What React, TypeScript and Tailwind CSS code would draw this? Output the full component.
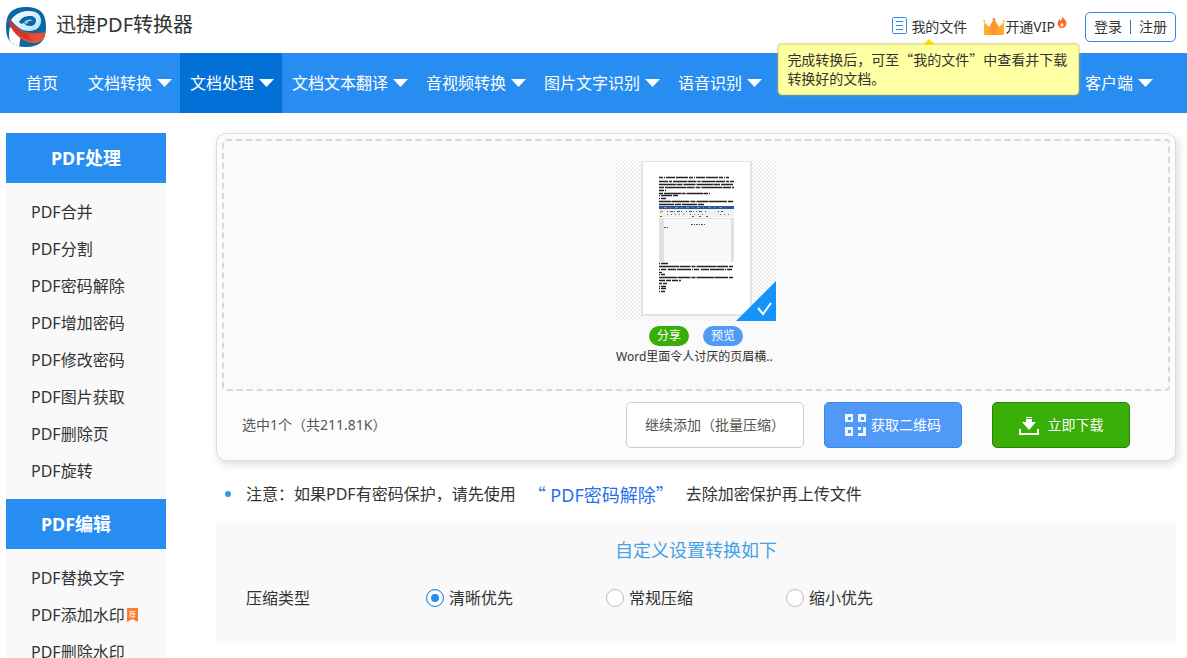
import React, { useState } from "react";

const menu = ["文档转换", "文档处理", "文档文本翻译", "音视频转换", "图片文字识别", "语音识别"];

const sideMenu = [
  {
    title: "PDF处理",
    pad: "",
    items: ["PDF合并", "PDF分割", "PDF密码解除", "PDF增加密码", "PDF修改密码", "PDF图片获取", "PDF删除页", "PDF旋转"],
  },
  {
    title: "PDF编辑",
    pad: "pr-5",
    items: ["PDF替换文字", "PDF添加水印", "PDF删除水印"],
  },
];

const compressTypes = ["清晰优先", "常规压缩", "缩小优先"];

// [y, width, dash pattern] of each text line on the page preview
const docLines: [number, number, string][] = [
  [16, 70, "4 1 1 1 9 1 12 1"],
  [20, 75, "9 1 3 1 14 0.5"],
  [23, 75, "17 0.5 6 1 12 1"],
  [26, 75, "5 1 21 0.5 8 1"],
  [29, 7, "5 1"],
  [32, 51, "4 1 17 0.5"],
  [34, 19, "1 1 10 0"],
  [37, 7, "1 1 5 0"],
  [40, 75, "12 0.5 18 1 5 1"],
  [43, 45, "15 1 6 1"],
  [102, 9, "1 1 8 0"],
  [105, 75, "20 0.5 11 1 4 1"],
  [108, 75, "1 1 5 2 8 1 14 1"],
  [111, 3, "3 0"],
  [113, 6, "1 1 5 0"],
  [116, 75, "18 0.5 13 1 4 1"],
  [119, 22, "6 1 5 1"],
  [122, 8, "3 1 4 0"],
  [125, 7, "1 1 5 0"],
  [127, 7, "1 1 5 0"],
  [130, 6, "1 1 5 0"],
];

function Caret() {
  return (
    <svg width="15" height="8" viewBox="0 0 15 8" className="shrink-0">
      <path d="M0 0h15L7.5 8z" fill="#fff" />
    </svg>
  );
}

function Logo() {
  return (
    <svg width="40" height="40" viewBox="0 0 40 40" className="shrink-0">
      <defs>
        <clipPath id="logoClip">
          <path d="M20 0C34 0 40 6 40 20S34 40 20 40 0 34 0 20 6 0 20 0z" />
        </clipPath>
        <linearGradient id="ring" x1="0" y1="0" x2="1" y2="1">
          <stop offset="0" stopColor="#fff" />
          <stop offset="1" stopColor="#b9dff3" />
        </linearGradient>
        <linearGradient id="swoosh" x1="0" y1="0" x2="1" y2="1">
          <stop offset="0" stopColor="#c92c20" />
          <stop offset="1" stopColor="#f2583b" />
        </linearGradient>
      </defs>
      <g clipPath="url(#logoClip)">
        <rect width="40" height="40" fill="#0868a5" />
        <path d="M4 20l11 8-2 12H7C3 35 2 28 4 20z" fill="#fff" />
        <path
          d="M5 13C10 6 16 4 23 4c8 0 12 4 12 10s-5 10-12 10c-6 0-12-3-18-11z"
          fill="url(#ring)"
        />
        <path d="M13 15c2-4 6-6 11-6 4 0 6 2 6 5s-3 5-6 5c-3 0-5-1-6-3-2 1-4 1-5-1z" fill="#0868a5" />
        <path d="M18 16c1-3 6-5 9-2-3-1-5 0-6 3z" fill="#8fc8e6" />
        <path d="M2 11C9 20 17 26 26 26c5 0 10 0 14-1-1 7-6 12-14 11C15 34 4 25 2 11z" fill="url(#swoosh)" />
        <path d="M2 11c5 8 12 14 20 16 1 3 2 5 5 7C16 31 6 25 2 11z" fill="#cf3627" />
      </g>
    </svg>
  );
}

function DocThumb() {
  return (
    <svg width="160" height="160" viewBox="0 0 160 160" className="block">
      <rect x="25" y="0" width="111" height="155" fill="#e4e4e4" />
      <rect x="27" y="1" width="107" height="152" fill="#fff" />
      {docLines.map(([y, w, dash]) => (
        <path key={y} d={`M43 ${y + 0.5}h${w}`} stroke="#222" strokeWidth="1.3" strokeDasharray={dash} />
      ))}
      <rect x="43" y="45" width="75" height="3" fill="#2b579a" />
      <path d="M48 46.5h60" stroke="#a9bede" strokeWidth=".6" strokeDasharray="3 3 1 4" />
      <rect x="43" y="48" width="75" height="8" fill="#f1f1f1" />
      <path d="M44 50.5h3" stroke="#e39b4a" strokeWidth="2" />
      <path d="M51 50.5h16M70 50.5h8M80 50.5h6M89 50.5h3M102 50.5h5" stroke="#555" strokeDasharray="1 2 3 1" />
      <path d="M51 53.5h20M74 53.5h16M104 53.5h10" stroke="#777" strokeDasharray="1 3" />
      <path d="M44 55.5h6M76 55.5h20" stroke="#555" strokeDasharray="2 5" />
      <rect x="43" y="57" width="75" height="44" fill="#e1e1e2" />
      <rect x="48" y="58" width="67" height="43" fill="#f8f8fb" />
      <path d="M75 63.5h14M48 66.5h4" stroke="#555" strokeDasharray="2 1 1 1" />
      <path d="M160 120v40h-40z" fill="#1494fb" />
      <path d="M142 147l5 6 8-11" fill="none" stroke="#fff" strokeWidth="2" />
    </svg>
  );
}

function Header() {
  return (
    <header className="flex items-center h-[53px] pl-[6px] pr-[11px]">
      <Logo />
      <h1 className="ml-[10px] mb-1 text-xl leading-6">迅捷PDF转换器</h1>

      <div className="flex items-center ml-auto text-sm">
        <div className="relative">
          <a href="#" className="flex items-center gap-1">
            <svg width="15" height="18" viewBox="0 0 15 18" className="mb-[2px]">
              <rect x=".5" y=".5" width="14" height="16" rx="1" fill="#fff" stroke="#288df0" />
              <path d="M4 4.500h7M4 8.500h7M4 12.500h7" stroke="#288df0" />
            </svg>
            我的文件
          </a>
          <div className="absolute z-10 top-[27px] -left-[114px] w-[301px] h-[51px] px-2 py-[5px] rounded-[4px] border border-[#eaea7c] bg-[#ffffa3] shadow-[0_0_3px_#b5b55c] font-['Noto_Sans_CJK_SC','Noto_Sans',sans-serif] leading-[19px] whitespace-nowrap">
            <svg width="12" height="6" viewBox="0 0 12 6" className="absolute -top-[6px] left-[144px]">
              <path d="M6 0l6 6H0z" fill="#ffd800" />
            </svg>
            完成转换后，可至“我的文件”中查看并下载
            <br />
            转换好的文档。
          </div>
        </div>

        <a href="#" className="flex items-center ml-4">
          <svg width="22" height="17" viewBox="0 0 22 17">
            <defs>
              <linearGradient id="crown" x1="0" y1="0" x2="1" y2="0">
                <stop offset="0" stopColor="#ffb62c" />
                <stop offset=".5" stopColor="#ff922c" />
                <stop offset="1" stopColor="#ffb62c" />
              </linearGradient>
            </defs>
            <path d="M1 17V4l5 5 5-8 5 8 5-5v13z" fill="url(#crown)" />
            <circle cx="1.3" cy="3" r="1.1" fill="#ffae35" />
            <circle cx="11" cy="1.5" r="1.4" fill="#ff8d28" />
            <circle cx="20.700" cy="3" r="1.1" fill="#ffae35" />
          </svg>
          开通VIP
          <svg width="10" height="12" viewBox="0 0 10 12" className="mb-[10px] ml-[2px]">
            <path d="M5 0c0 2 4 3 4.500 7 0 3-2 5-4.500 5S.5 10 .5 7.500C.5 5.500 2 5 2 3c1 .5 1.500 1 1.500 2C5 4 5 2 5 0z" fill="#fb6a2e" />
            <path d="M5 7c1 1 1.500 1 1.500 2S6 10.500 5 10.500 3.500 10 3.500 9 4 8 5 7z" fill="#fff" />
          </svg>
        </a>

        <div className="flex items-center justify-center gap-2 ml-[18px] w-[91px] h-[30px] rounded-[5px] border border-[#288df0]">
          <a href="#">登录</a>
          <span className="w-px h-[14px] bg-[#4a6f96]"></span>
          <a href="#">注册</a>
        </div>
      </div>
    </header>
  );
}

function NavItem({ name, active }: { name: string; active?: boolean }) {
  return (
    <a
      href="#"
      className={
        active
          ? "flex items-center gap-[5px] pl-[10px] pr-2 h-full bg-[#0370d8]"
          : "flex items-center gap-[5px] pl-[10px] pr-2 h-full"
      }
    >
      {name}
      <Caret />
    </a>
  );
}

function Sidebar() {
  return (
    <aside className="w-40 shrink-0 bg-[#f9f9f9]">
      {sideMenu.map((group) => (
        <div key={group.title}>
          <h2 className={`flex items-center justify-center h-[50px] bg-[#288df0] text-white text-lg font-bold ${group.pad}`}>
            {group.title}
          </h2>
          <ul className="py-[10px]">
            {group.items.map((item) => (
              <li key={item}>
                <a href="#" className="flex items-center h-[37px] pl-[25px]">
                  {item}
                  {item === "PDF添加水印" && (
                    <svg width="12" height="14" viewBox="0 0 12 14" className="ml-[2px]">
                      <path d="M0 0h11v14l-5.500-3L0 14z" fill="#fb7c30" />
                      <text x="2" y="8.500" fontSize="7" fill="#fff">
                        荐
                      </text>
                    </svg>
                  )}
                </a>
              </li>
            ))}
          </ul>
        </div>
      ))}
    </aside>
  );
}

function FileCard() {
  return (
    <section className="rounded-[10px] border border-[#dcdcdc] bg-[#fcfcfc] shadow-[2px_3px_8px_#dcdcdc]">
      <div className="m-[5px] mb-0 pt-5 pb-6 rounded-[4px] border-2 border-dashed border-[#d8d8d8] bg-[#fafafa] flex flex-col items-center">
        <div className="bg-[repeating-conic-gradient(#f0f0f0_0_25%,#fdfdfd_0_50%)] bg-[length:4px_4px]">
          <DocThumb />
        </div>
        <div className="flex gap-[14px] mt-[5px] text-xs text-white">
          <button className="w-10 h-5 rounded-full bg-[#38ae06]">分享</button>
          <button className="w-10 h-5 rounded-full bg-[#5099f7]">预览</button>
        </div>
        <p className="w-40 h-[19px] leading-[21px] text-xs whitespace-nowrap">Word里面令人讨厌的页眉横..</p>
      </div>

      <div className="flex items-center pt-[11px] pb-3 pl-[25px] pr-[45px] text-sm text-[#555]">
        <p className="mr-auto">选中1个（共211.81K）</p>
        <button className="w-[178px] h-[46px] rounded-[5px] border border-[#ccc] bg-white">继续添加（批量压缩）</button>
        <button className="flex items-center justify-center gap-1 ml-5 w-[138px] h-[46px] rounded-[5px] border border-[#3e86e4] bg-[#5099f7] text-white">
          <svg width="22" height="22" viewBox="0 0 22 22" fill="#f0f5ff">
            <path fillRule="evenodd" d="M0 0h8v8H0zm3 3v3h3V3zM13 0h8v8h-8zm3 3v3h3V3zM0 13h8v9H0zm3 3v3h3v-3z" />
            <path d="M13 13h3v3h-3zM18 13h3v9h-8v-3h5z" />
          </svg>
          获取二维码
        </button>
        <button className="flex items-center justify-center gap-[9px] ml-[30px] w-[138px] h-[46px] rounded-[5px] border border-[#2a8504] bg-[#38ae06] text-white">
          <svg width="20" height="20" viewBox="0 0 20 20" fill="#fff">
            <path d="M7 2h6v1H7zM7 4h6v3h4l-7 8-7-8h4z" />
            <path d="M0 14h2v4h16v-4h2v6H0z" />
          </svg>
          立即下载
        </button>
      </div>
    </section>
  );
}

function App() {
  const [type, setType] = useState("清晰优先");

  return (
    <div className="h-screen overflow-x-hidden overflow-y-auto [scrollbar-width:none] bg-white text-base leading-6 text-[#333] font-['Noto_Sans','Noto_Sans_CJK_SC',sans-serif]">
      <Header />

      <nav className="flex items-center h-[60px] pl-[6px] pr-[26px] bg-[#288df0] text-white whitespace-nowrap">
        <a href="#" className="px-5">首页</a>
        {menu.map((name) => (
          <NavItem key={name} name={name} active={name === "文档处理"} />
        ))}
        <div className="ml-auto">
          <NavItem name="客户端" />
        </div>
      </nav>

      <div className="flex gap-[50px] pt-5 pl-[6px] pr-[11px]">
        <Sidebar />

        <main className="flex-1 min-w-0">
          <FileCard />

          <p className="flex items-center h-[60px] pl-[9px] pt-[6px] whitespace-nowrap">
            <span className="w-[6px] h-[6px] mr-[15px] rounded-full bg-[#2e9be6]"></span>
            注意：如果PDF有密码保护，请先使用
            <a href="#" className="mx-3 text-lg leading-6 text-[#2a6fe8]">
              <span className="font-['Noto_Sans_CJK_SC',sans-serif]">“</span>
              {" PDF密码解除"}
              <span className="font-['Noto_Sans_CJK_SC',sans-serif]">”</span>
            </a>
            去除加密保护再上传文件
          </p>

          <section className="h-[122px] pt-[17px] bg-[#f9f9f9]">
            <h2 className="text-center text-lg leading-6 text-[#45a0e6]">自定义设置转换如下</h2>
            <fieldset className="flex items-center mt-6 pl-[30px]">
              <legend className="float-left w-[180px]">压缩类型</legend>
              {compressTypes.map((name) => (
                <label key={name} className="flex items-center gap-[5px] w-[180px]">
                  <input
                    type="radio"
                    name="type"
                    value={name}
                    checked={type === name}
                    onChange={(e) => setType(e.target.value)}
                    className="appearance-none w-[18px] h-[18px] rounded-full border border-[#bbb] bg-white checked:border-[#288df0] checked:bg-[#288df0] checked:shadow-[inset_0_0_0_4px_#fff]"
                  />
                  {name}
                </label>
              ))}
            </fieldset>
          </section>
        </main>
      </div>
    </div>
  );
}

export default App;
